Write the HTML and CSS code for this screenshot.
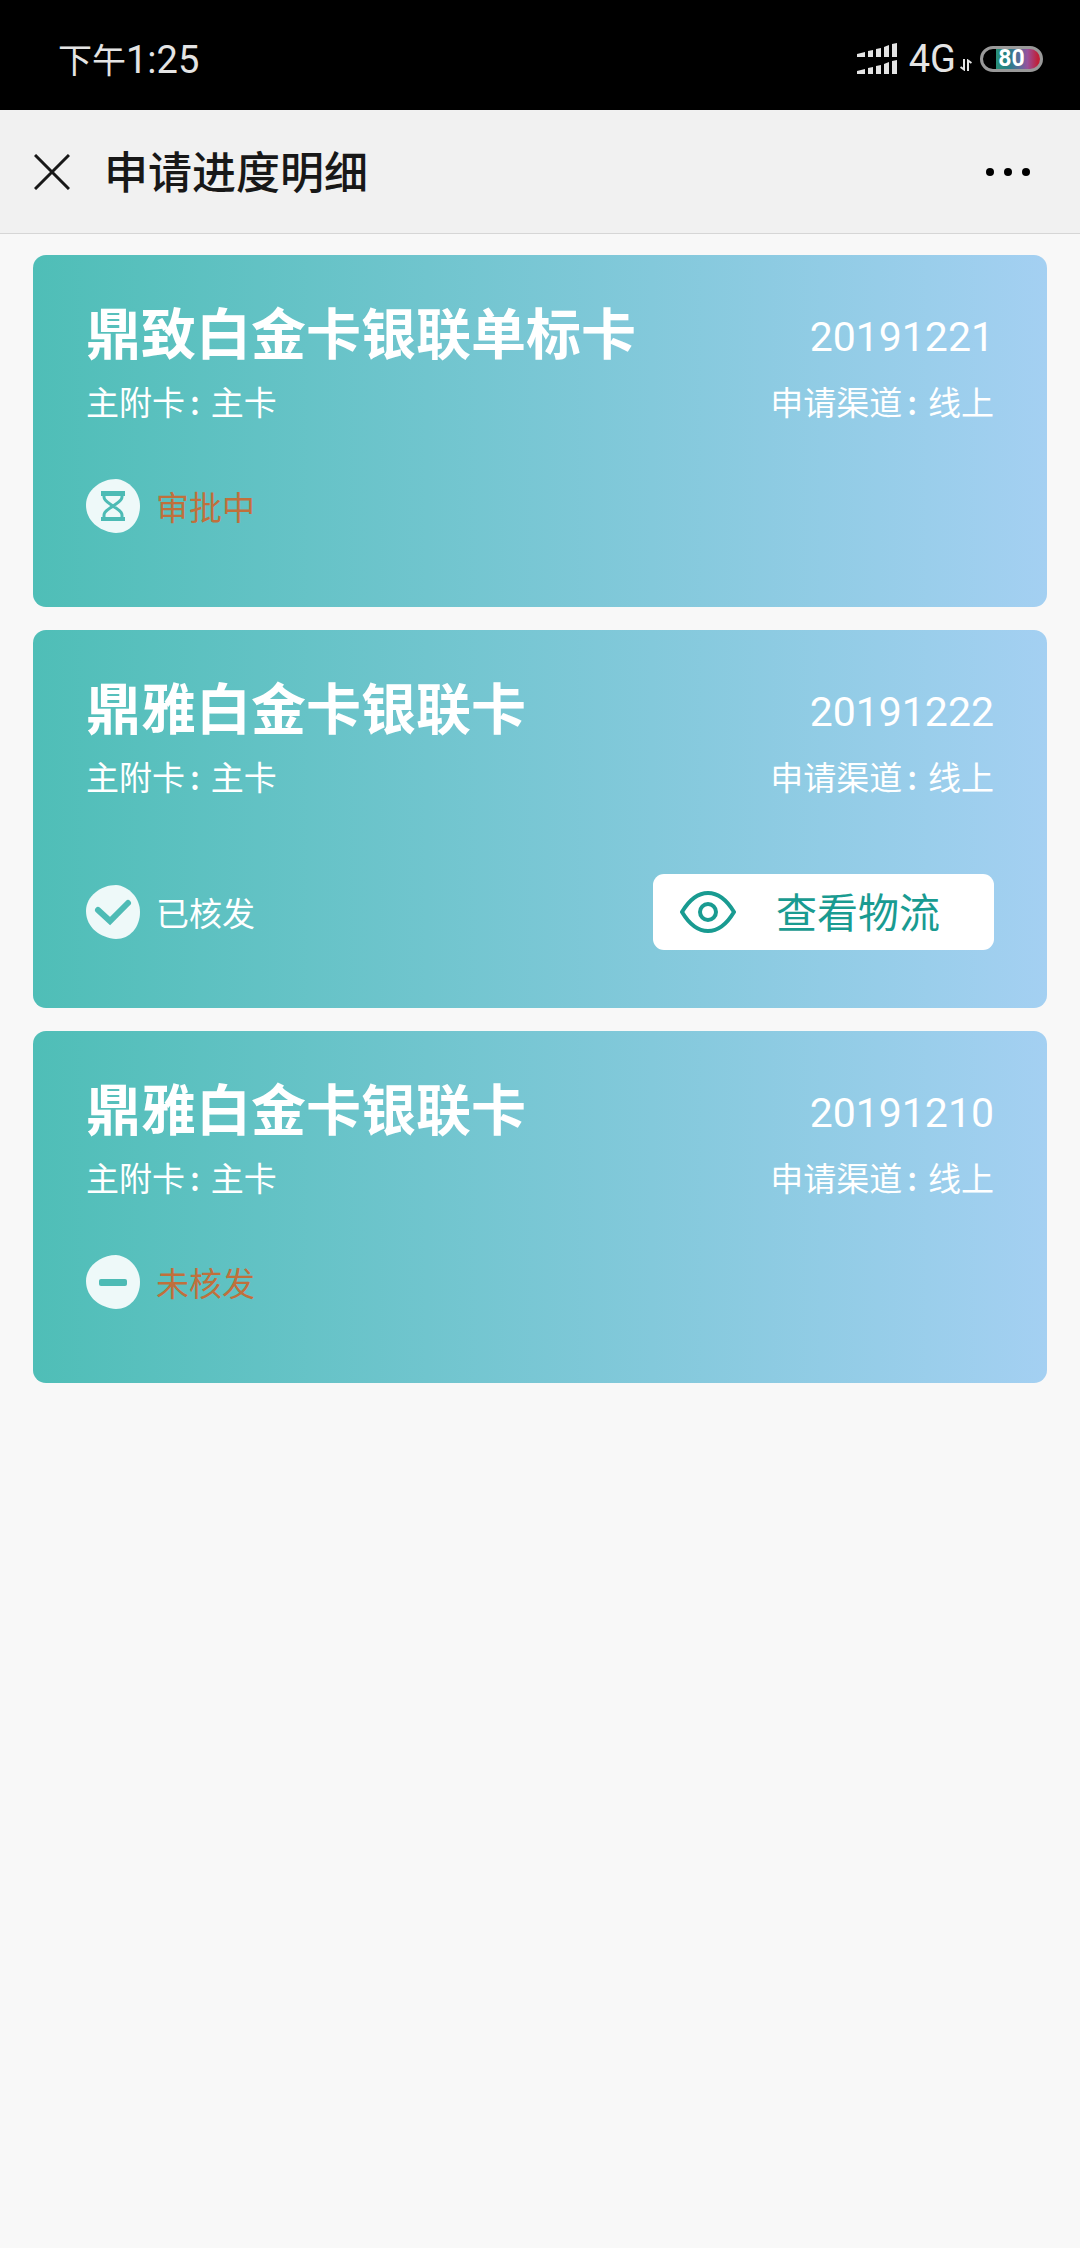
FILE: index.html
```html
<!DOCTYPE html>
<html lang="zh-CN">
<head>
  <meta charset="utf-8">
  <meta name="viewport" content="width=device-width, initial-scale=1">
  <title>申请进度明细</title>
  <link rel="stylesheet" href="styles.css">
</head>
<body>
  <div class="status-bar">
    <div class="clock">下午<span class="clock-digits">1:25</span></div>
    <div class="indicators">
      <svg class="signal" viewBox="0 0 40 32" aria-hidden="true">
        <path d="M0 11 8 9V14H0ZM11 8 16 7V14H11ZM19 6 24 5V14H19ZM27 4 32 2V14H27ZM35 1 40 0V14H35ZM0 28 8 26V31H0ZM11 25 16 24V31H11ZM19 23 24 22V31H19ZM27 21 32 19V31H27ZM35 18 40 17V31H35Z"/>
      </svg>
      <span class="network">4G</span>
      <svg class="data" viewBox="0 0 12 12" aria-hidden="true">
        <path d="M4 0V10.500L0.500 8M8 12V1.500L11.500 4"/>
      </svg>
      <span class="battery">80</span>
    </div>
  </div>

  <header class="nav">
    <button class="icon-button" type="button" aria-label="关闭">
      <svg class="close" viewBox="0 0 36 36" aria-hidden="true"><path d="M1 1 35 35M35 1 1 35"/></svg>
    </button>
    <h1 class="nav-title">申请进度明细</h1>
    <button class="icon-button" type="button" aria-label="更多">
      <svg class="more" viewBox="0 0 44 8" aria-hidden="true"><circle cx="4" cy="4" r="4"/><circle cx="22" cy="4" r="4"/><circle cx="40" cy="4" r="4"/></svg>
    </button>
  </header>

  <main class="cards">
    <article class="card">
      <div class="row head">
        <h2 class="name">鼎致白金卡银联单标卡</h2>
        <time class="date" datetime="2019-12-21">20191221</time>
      </div>
      <div class="row meta">
        <p>主附卡<span class="colon">:</span>主卡</p>
        <p>申请渠道<span class="colon">:</span>线上</p>
      </div>
      <div class="row progress">
        <div class="state state-alert">
          <svg class="badge" viewBox="0 0 54 54" aria-hidden="true">
            <path class="badge-bg" d="M30 0C43 1 54 13 54 27C54 42 44 54 30 54C15 53 0 43 0 26C0 11 15 0 30 0Z"/>
            <path class="badge-line" d="M16 14.500H38M16 39.500H38M18 15V18C18 22 23 24 27 27C31 30 36 32 36 36V39M36 15V18C36 22 31 24 27 27C23 30 18 32 18 36V39"/>
            <path class="badge-fill" d="M15 12H39V17H15ZM15 38H39V42H15Z"/>
          </svg>
          <span>审批中</span>
        </div>
      </div>
    </article>

    <article class="card">
      <div class="row head">
        <h2 class="name">鼎雅白金卡银联卡</h2>
        <time class="date" datetime="2019-12-22">20191222</time>
      </div>
      <div class="row meta">
        <p>主附卡<span class="colon">:</span>主卡</p>
        <p>申请渠道<span class="colon">:</span>线上</p>
      </div>
      <div class="row progress progress-action">
        <div class="state">
          <svg class="badge" viewBox="0 0 54 54" aria-hidden="true">
            <path class="badge-bg" d="M30 0C43 1 54 13 54 27C54 42 44 54 30 54C15 53 0 43 0 26C0 11 15 0 30 0Z"/>
            <path class="badge-check" d="M12 25 24 36 42 18"/>
          </svg>
          <span>已核发</span>
        </div>
        <button class="track" type="button">
          <svg class="eye" viewBox="0 0 56 42" aria-hidden="true"><path d="M2 21C8 11 16 2 28 2S48 11 54 21C48 31 40 40 28 40S8 31 2 21Z"/><circle cx="28" cy="21" r="8"/></svg>
          <span>查看物流</span>
        </button>
      </div>
    </article>

    <article class="card">
      <div class="row head">
        <h2 class="name">鼎雅白金卡银联卡</h2>
        <time class="date" datetime="2019-12-10">20191210</time>
      </div>
      <div class="row meta">
        <p>主附卡<span class="colon">:</span>主卡</p>
        <p>申请渠道<span class="colon">:</span>线上</p>
      </div>
      <div class="row progress">
        <div class="state state-alert">
          <svg class="badge" viewBox="0 0 54 54" aria-hidden="true">
            <path class="badge-bg" d="M30 0C43 1 54 13 54 27C54 42 44 54 30 54C15 53 0 43 0 26C0 11 15 0 30 0Z"/>
            <rect class="badge-fill" x="13" y="24" width="28" height="7" rx="2"/>
          </svg>
          <span>未核发</span>
        </div>
      </div>
    </article>
  </main>
</body>
</html>
```
FILE: styles.css
```css
* {
  box-sizing: border-box;
}

body {
  margin: 0;
  background: #f8f8f8;
  color: #181818;
  font-family: "Noto Sans CJK SC", sans-serif;
}

h1,
h2,
p {
  margin: 0;
}

button {
  border: 0;
  padding: 0;
  background: none;
  font: inherit;
}

svg {
  display: block;
  flex: none;
  fill: none;
}

/* System status bar */
.status-bar {
  display: flex;
  align-items: center;
  justify-content: space-between;
  height: 110px;
  padding: 8px 37px 0 58px;
  background: #000;
  color: #e4e4e4;
}

.clock {
  font-size: 34px;
  line-height: 48px;
}

.clock-digits {
  font-family: Roboto, sans-serif;
  font-size: 38px;
}

.indicators {
  display: flex;
  align-items: center;
}

.signal {
  width: 40px;
  height: 32px;
  margin-right: 12px;
  fill: #e4e4e4;
}

.network {
  font-family: Roboto, sans-serif;
  font-size: 38px;
  line-height: 40px;
}

.data {
  align-self: flex-end;
  width: 12px;
  height: 12px;
  margin: 0 8px 8px 4px;
  stroke: #e4e4e4;
  stroke-width: 2;
}

.battery {
  width: 63px;
  height: 26px;
  border: 3px solid #999;
  border-radius: 13px;
  background: linear-gradient(90deg, #000 0 23%, #2a9077 23%, #257f87 45%, #5d6a9c 65%, #98509c 78%, #c02038 96%);
  color: #fff;
  font-family: Roboto, sans-serif;
  font-size: 23px;
  font-weight: 700;
  line-height: 20px;
  text-align: center;
}

/* Page navigation */
.nav {
  display: flex;
  align-items: center;
  height: 124px;
  padding: 0 50px 0 34px;
  border-bottom: 1px solid #d6d6d6;
  background: #f1f1f1;
}

.nav-title {
  flex: 1;
  margin-left: 34px;
  padding-bottom: 4px;
  font-size: 44px;
  font-weight: 500;
  line-height: 60px;
}

.close {
  width: 36px;
  height: 36px;
  stroke: #181818;
  stroke-width: 3;
}

.more {
  width: 44px;
  height: 8px;
  fill: #000;
}

/* Application cards */
.cards {
  display: grid;
  gap: 23px;
  padding: 21px 33px;
}

.card {
  padding: 50px 53px 58px;
  border-radius: 13px;
  background: linear-gradient(90deg, #4fbeb7, #a4d0f2);
  color: #fff;
}

.row {
  display: flex;
  align-items: center;
  justify-content: space-between;
}

.head {
  align-items: flex-start;
}

.name {
  font-size: 55px;
  font-weight: 700;
  line-height: 50px;
}

.date {
  font-family: Roboto, sans-serif;
  font-size: 41px;
  line-height: 64px;
}

.meta {
  margin-top: 12px;
  font-size: 33px;
  line-height: 40px;
}

.colon {
  padding: 0 11px 0 5px;
  font-weight: 500;
}

.progress {
  height: 54px;
  margin: 58px 0 16px;
  font-size: 33px;
}

.progress-action {
  height: 76px;
  margin: 78px 0 0;
}

.state {
  display: flex;
  align-items: center;
  gap: 16px;
}

.state-alert {
  color: #c0703c;
}

.badge {
  width: 54px;
  height: 54px;
}

.badge-bg {
  fill: #eef9f9;
}

.badge-line {
  stroke: #4dbbb5;
  stroke-width: 3;
}

.badge-fill {
  fill: #4dbbb5;
}

.badge-check {
  stroke: #4dbbb5;
  stroke-width: 6;
  stroke-linecap: round;
}

.track {
  display: flex;
  align-items: center;
  gap: 40px;
  height: 76px;
  padding: 0 54px 0 27px;
  border-radius: 11px;
  background: #fff;
  color: #199b91;
  font-size: 41px;
  line-height: 56px;
}

.track span {
  padding-bottom: 4px;
}

.eye {
  width: 56px;
  height: 42px;
  stroke: #199b91;
  stroke-width: 4;
}
```
